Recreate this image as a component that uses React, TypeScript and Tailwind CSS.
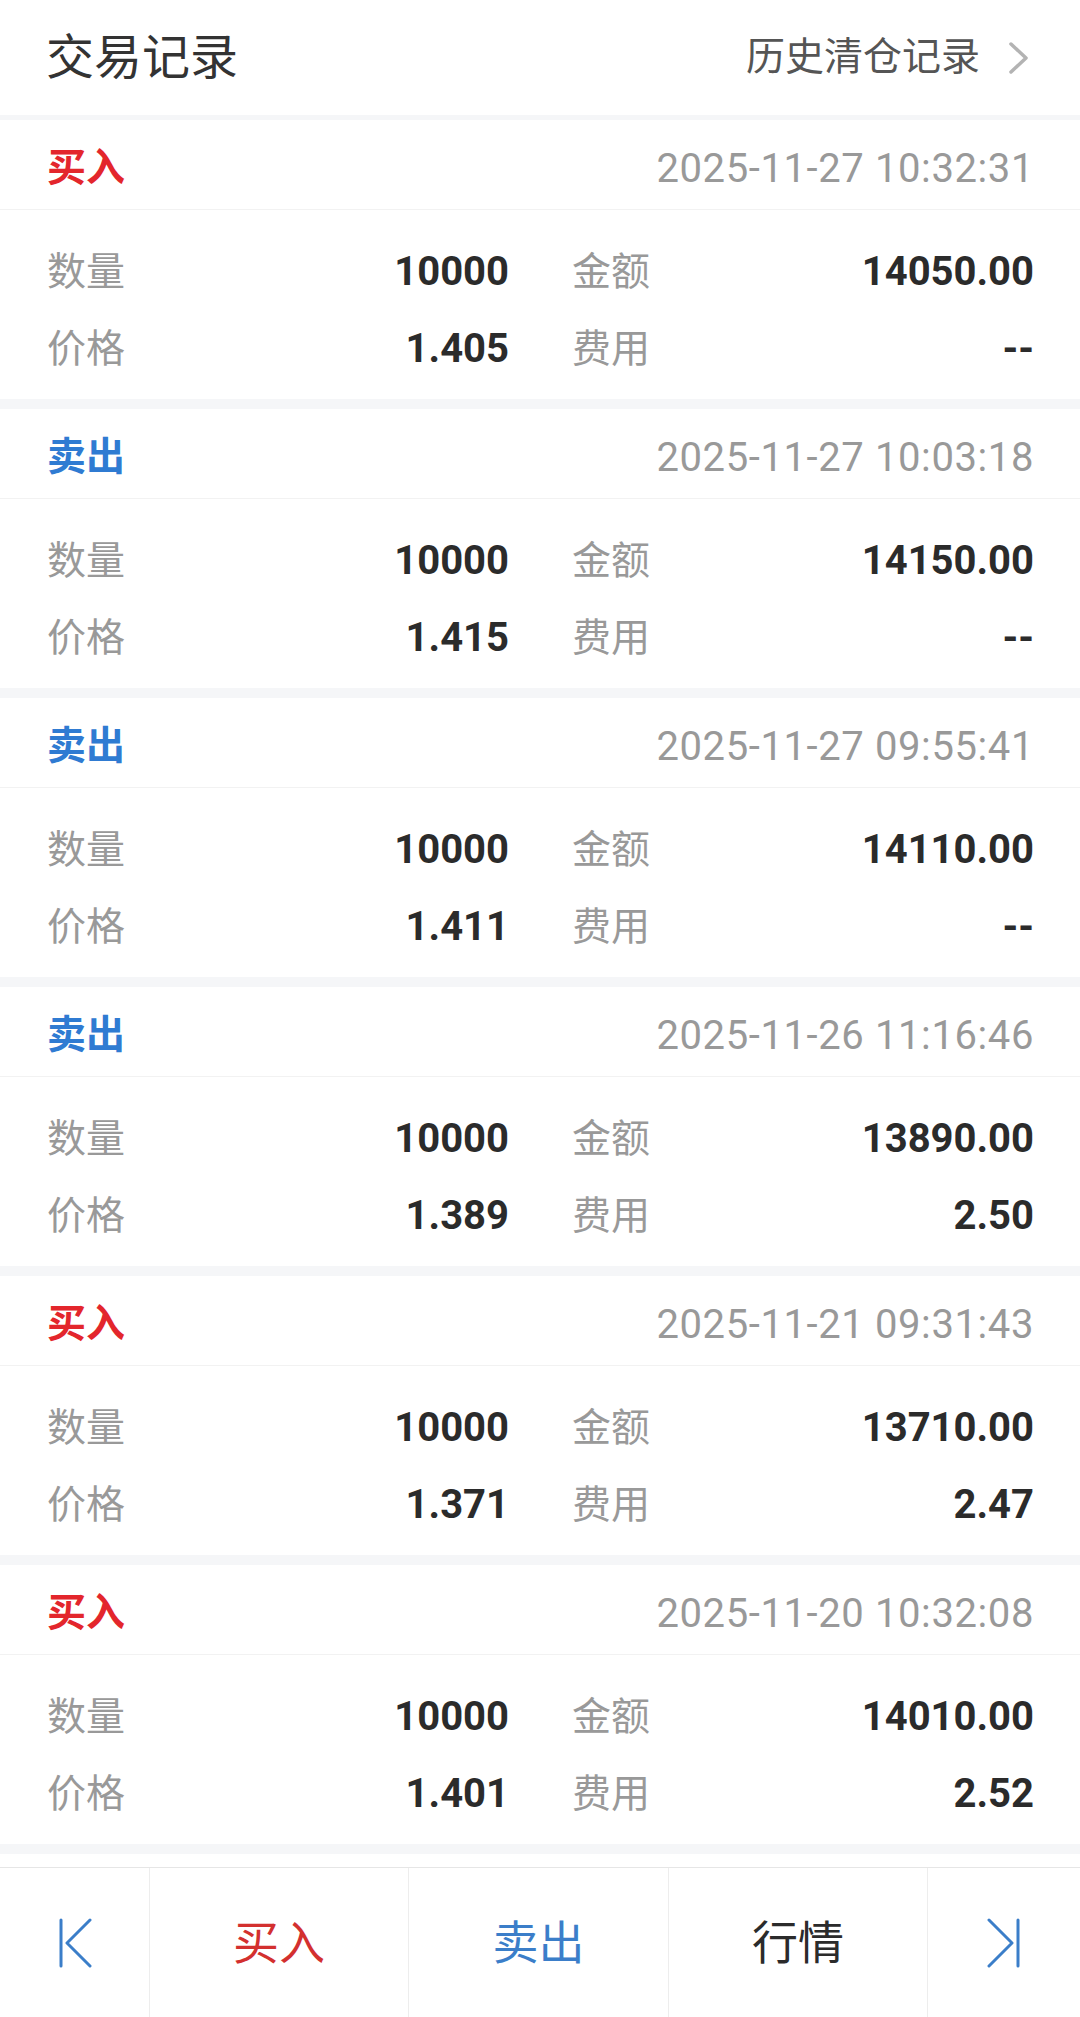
import React from "react";

type Rec = { side: "buy" | "sell"; time: string; qty: string; amount: string; price: string; fee: string };

const records: Rec[] = [
  { side: "buy", time: "2025-11-27 10:32:31", qty: "10000", amount: "14050.00", price: "1.405", fee: "--" },
  { side: "sell", time: "2025-11-27 10:03:18", qty: "10000", amount: "14150.00", price: "1.415", fee: "--" },
  { side: "sell", time: "2025-11-27 09:55:41", qty: "10000", amount: "14110.00", price: "1.411", fee: "--" },
  { side: "sell", time: "2025-11-26 11:16:46", qty: "10000", amount: "13890.00", price: "1.389", fee: "2.50" },
  { side: "buy", time: "2025-11-21 09:31:43", qty: "10000", amount: "13710.00", price: "1.371", fee: "2.47" },
  { side: "buy", time: "2025-11-20 10:32:08", qty: "10000", amount: "14010.00", price: "1.401", fee: "2.52" },
];

const FONT = { fontFamily: 'Roboto, "Noto Sans CJK SC", sans-serif' };

function Card({ r }: { r: Rec }) {
  return (
    <div className="bg-white shrink-0">
      <div className="h-[90px] pt-[8px] flex items-center justify-between pl-[47px] pr-[46px] border-b border-[#f2f2f2]">
        <span
          className={
            "text-[39px] font-bold leading-none " + (r.side === "buy" ? "text-[#e3262c]" : "text-[#2f7bd2]")
          }
        >
          {r.side === "buy" ? "买入" : "卖出"}
        </span>
        <span className="text-[40px] leading-none tracking-[0.6px] text-[#999999]">{r.time}</span>
      </div>
      <div className="pl-[47px] pr-[46px] pt-[34px] pb-[22px] grid grid-cols-2 gap-x-[63px] gap-y-[21px]">
        <div className="h-[56px] flex items-center justify-between">
          <span className="text-[39px] text-[#999999]">数量</span>
          <span className="text-[40px] font-bold text-[#2b2b2b]">{r.qty}</span>
        </div>
        <div className="h-[56px] flex items-center justify-between">
          <span className="text-[39px] text-[#999999]">金额</span>
          <span className="text-[40px] font-bold text-[#2b2b2b]">{r.amount}</span>
        </div>
        <div className="h-[56px] flex items-center justify-between">
          <span className="text-[39px] text-[#999999]">价格</span>
          <span className="text-[40px] font-bold text-[#2b2b2b]">{r.price}</span>
        </div>
        <div className="h-[56px] flex items-center justify-between">
          <span className="text-[39px] text-[#999999]">费用</span>
          <span className="text-[40px] font-bold text-[#2b2b2b]">{r.fee}</span>
        </div>
      </div>
    </div>
  );
}

export default function App() {
  return (
    <div className="w-[1080px] h-[2017px] flex flex-col overflow-hidden bg-[#f5f6f8]" style={FONT}>
      <div className="flex-1 overflow-hidden flex flex-col">
        <div className="h-[115px] shrink-0 bg-white flex items-center justify-between pl-[46px] pr-[50px]">
          <span className="text-[48px] text-[#333333] leading-none">交易记录</span>
          <div className="flex items-center gap-[28px]">
            <span className="text-[39px] text-[#555555] leading-none">历史清仓记录</span>
            <svg width="22" height="34" viewBox="0 0 22 34" fill="none">
              <path d="M3 3 L18 17 L3 31" stroke="#b3b3b3" strokeWidth="3.5" strokeLinecap="round" strokeLinejoin="round" />
            </svg>
          </div>
        </div>
        <div className="flex flex-col gap-[10px] pt-[5px]">
          {records.map((r, i) => (
            <Card key={i} r={r} />
          ))}
          <div className="h-[40px] bg-white shrink-0" />
        </div>
      </div>
      <div className="h-[150px] shrink-0 bg-white border-t border-[#e6e6e6] flex">
        <div className="w-[150px] flex items-center justify-center border-r border-[#ededed]">
          <svg width="36" height="50" viewBox="0 0 36 50" fill="none">
            <path d="M4 2 L4 48" stroke="#3b7ec9" strokeWidth="3" strokeLinecap="round" />
            <path d="M33 2 L10 25 L33 48" stroke="#3b7ec9" strokeWidth="3" strokeLinecap="round" strokeLinejoin="round" />
          </svg>
        </div>
        <div className="w-[259px] flex items-center justify-center border-r border-[#ededed]">
          <span className="text-[46px] text-[#d3302f] leading-none">买入</span>
        </div>
        <div className="w-[260px] flex items-center justify-center border-r border-[#ededed]">
          <span className="text-[46px] text-[#3b7ec9] leading-none">卖出</span>
        </div>
        <div className="w-[259px] flex items-center justify-center border-r border-[#ededed]">
          <span className="text-[46px] text-[#2b2b2b] leading-none">行情</span>
        </div>
        <div className="flex-1 flex items-center justify-center">
          <svg width="36" height="50" viewBox="0 0 36 50" fill="none">
            <path d="M32 2 L32 48" stroke="#3b7ec9" strokeWidth="3" strokeLinecap="round" />
            <path d="M3 2 L26 25 L3 48" stroke="#3b7ec9" strokeWidth="3" strokeLinecap="round" strokeLinejoin="round" />
          </svg>
        </div>
      </div>
    </div>
  );
}
